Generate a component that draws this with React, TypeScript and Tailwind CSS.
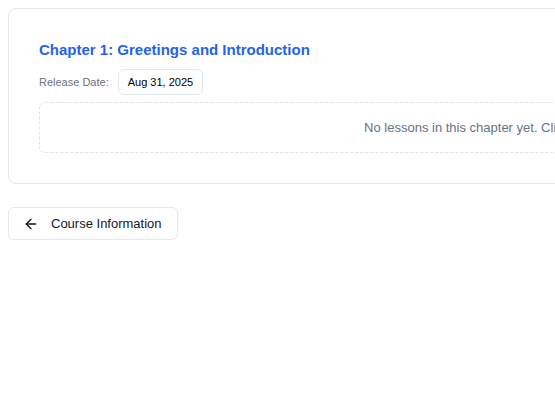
import { ArrowLeft } from "lucide-react";

export default function App() {
  return (
    <div className="w-[555px] h-[414px] overflow-hidden bg-white p-2 font-['Liberation_Sans',Arial,sans-serif]">
      {/* Chapter card */}
      <div className="w-[1082px] rounded-lg border border-[#e2e8f0] bg-white px-[30px] pt-[31px] pb-[30px]">
        <h2 className="text-[15px] font-bold leading-[20px] text-[#2563eb]">
          Chapter 1: Greetings and Introduction
        </h2>
        <div className="mt-[9px] flex items-center gap-[9px]">
          <span className="text-[11px] text-[#6b7280]">Release Date:</span>
          <span className="flex h-[26px] items-center rounded-md border border-[#e2e8f0] px-[9px] text-[11px] text-black">
            Aug 31, 2025
          </span>
        </div>
        <div className="mt-[7px] flex h-[51px] items-center justify-center rounded-md border border-dashed border-[#dde3ea] text-[13px] text-[#64748b]">
          No lessons in this chapter yet. Click "Add Lesson" to get started.
        </div>
      </div>

      {/* Back button */}
      <button
        type="button"
        className="mt-[23px] flex h-[33px] w-[170px] items-center gap-[12px] rounded-md border border-[#e2e8f0] bg-white pl-[14px] text-[13px] text-[#111827]"
      >
        <ArrowLeft className="h-4 w-4" strokeWidth={2} />
        <span>Course Information</span>
      </button>
    </div>
  );
}
